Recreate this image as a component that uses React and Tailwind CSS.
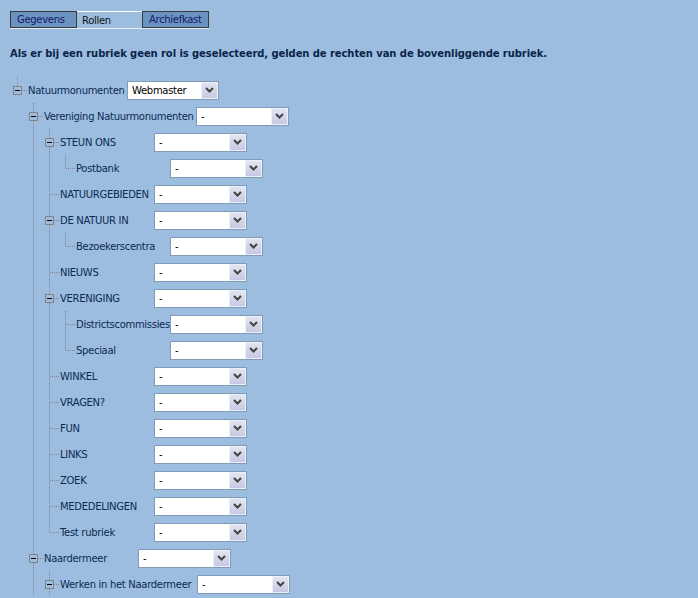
import React from "react";

const ROWS = [
  { l: 0, t: "Natuurmonumenten", c: true, n: false, w: "w-[99px]", v: "Webmaster", sw: "w-[92px]" },
  { l: 1, t: "Vereniging Natuurmonumenten", c: true, n: true, w: "w-[152px]" },
  { l: 2, t: "STEUN ONS", c: true, n: true, w: "w-[94px]" },
  { l: 3, t: "Postbank", c: false, n: false, w: "w-[94px]" },
  { l: 2, t: "NATUURGEBIEDEN", c: false, n: true, w: "w-[94px]" },
  { l: 2, t: "DE NATUUR IN", c: true, n: true, w: "w-[94px]" },
  { l: 3, t: "Bezoekerscentra", c: false, n: false, w: "w-[94px]" },
  { l: 2, t: "NIEUWS", c: false, n: true, w: "w-[94px]" },
  { l: 2, t: "VERENIGING", c: true, n: true, w: "w-[94px]" },
  { l: 3, t: "Districtscommissies", c: false, n: true, w: "w-[94px]" },
  { l: 3, t: "Speciaal", c: false, n: false, w: "w-[94px]" },
  { l: 2, t: "WINKEL", c: false, n: true, w: "w-[94px]" },
  { l: 2, t: "VRAGEN?", c: false, n: true, w: "w-[94px]" },
  { l: 2, t: "FUN", c: false, n: true, w: "w-[94px]" },
  { l: 2, t: "LINKS", c: false, n: true, w: "w-[94px]" },
  { l: 2, t: "ZOEK", c: false, n: true, w: "w-[94px]" },
  { l: 2, t: "MEDEDELINGEN", c: false, n: true, w: "w-[94px]" },
  { l: 2, t: "Test rubriek", c: false, n: false, w: "w-[94px]" },
  { l: 1, t: "Naardermeer", c: true, n: true, w: "w-[94px]" },
  { l: 2, t: "Werken in het Naardermeer", c: true, n: true, w: "w-[137px]" },
];

const DOT = "#7d8796";

function Guide({ on }) {
  return (
    <svg width="16" height="26" className="shrink-0" shapeRendering="crispEdges">
      {on && <line x1="8.5" y1="0" x2="8.5" y2="26" stroke={DOT} strokeWidth="1" strokeDasharray="1 1" />}
    </svg>
  );
}

function Own({ c, n }) {
  return (
    <svg width="19" height="26" className="shrink-0" shapeRendering="crispEdges">
      {c ? (
        <>
          <line x1="8.5" y1="0" x2="8.5" y2="9" stroke={DOT} strokeDasharray="1 1" />
          {n && <line x1="8.5" y1="18" x2="8.5" y2="26" stroke={DOT} strokeDasharray="1 1" />}
          <line x1="13" y1="13.5" x2="19" y2="13.5" stroke={DOT} strokeDasharray="1 1" />
          <rect x="4.5" y="9.5" width="8" height="8" fill="none" stroke="#848484" />
          <line x1="6" y1="13.5" x2="11" y2="13.5" stroke="#000" />
        </>
      ) : (
        <>
          <line x1="8.5" y1="0" x2="8.5" y2={n ? 26 : 14} stroke={DOT} strokeDasharray="1 1" />
          <line x1="9" y1="13.5" x2="18" y2="13.5" stroke={DOT} strokeDasharray="1 1" />
        </>
      )}
    </svg>
  );
}

function Select({ v = "-", w = "w-[93px]" }) {
  return (
    <div className={`${w} flex h-[19px] shrink-0 border border-[#7f9db9] bg-white`}>
      <span className="flex-1 pl-[4px] text-[10px] leading-[17px] text-black">{v}</span>
      <div className="flex h-[17px] w-[17px] items-center justify-center border border-[#eef0f8] bg-gradient-to-b from-[#e2e4f2] to-[#c6c9e2]">
        <svg width="9" height="6" viewBox="0 0 9 6">
          <polyline points="1,1 4.5,4.5 8,1" fill="none" stroke="#444" strokeWidth="2" />
        </svg>
      </div>
    </div>
  );
}

export default function App() {
  const stack = [];
  const rows = ROWS.map((r, i) => {
    const anc = stack.slice(0, r.l);
    stack[r.l] = r.n;
    stack.length = r.l + 1;
    return (
      <div key={i} className="flex h-[26px] items-center pl-[9px]">
        {anc.map((a, j) => (
          <Guide key={j} on={a} />
        ))}
        <Own c={r.c} n={r.n} />
        <span className={`${r.w} shrink-0 whitespace-nowrap text-[10px] text-[#0c2a52]`}>{r.t}</span>
        <Select v={r.v} w={r.sw} />
      </div>
    );
  });

  return (
    <div className="min-h-screen bg-[#9cbde0] font-['DejaVu_Sans',sans-serif] tracking-[-0.3px]">
      <div className="pt-[11px] pl-[10px]">
        <div className="flex w-[199px] border-b border-[#e4ecf6]">
          <div className="flex h-[17px] w-[67px] items-center border border-[#3a3a3a] bg-[#6b93bf] pl-[6px] text-[10px] text-[#16166e]">
            Gegevens
          </div>
          <div className="flex h-[17px] w-[65px] items-center border-t border-white pl-[5px] text-[10px] text-[#111]">
            Rollen
          </div>
          <div className="flex h-[17px] w-[67px] items-center border border-[#3a3a3a] bg-[#6b93bf] pl-[6px] text-[10px] text-[#16166e]">
            Archiefkast
          </div>
        </div>
      </div>
      <div className="mt-[19px] pl-[10px] text-[10px] font-bold leading-[12px] tracking-[-0.08px] text-[#0a2448]">
        Als er bij een rubriek geen rol is geselecteerd, gelden de rechten van de bovenliggende rubriek.
      </div>
      <div className="mt-[17px]">{rows}</div>
    </div>
  );
}
